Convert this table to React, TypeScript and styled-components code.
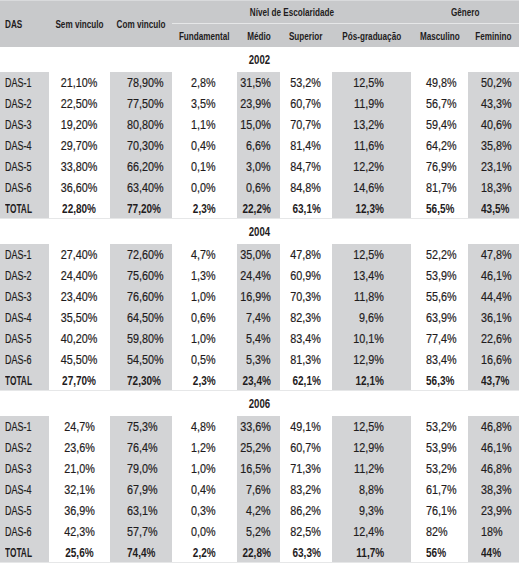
import React from "react";
import styled, { createGlobalStyle } from "styled-components";

const Global = createGlobalStyle`
  html, body { margin: 0; padding: 0; background: #ffffff; }
  body { font-family: "Liberation Sans", Arial, sans-serif; color: #1f1c1d; }
`;

const GRAY_HEAD = "#c8c9cb";
const GRAY_CELL = "#d3d4d6";
const LINE = "#e6e7e8";

type Align = "left" | "right" | "center";
interface ColSpec { width: number; align: Align; pad: number; shaded: boolean; }

const COLS: ColSpec[] = [
  { width: 49, align: "left", pad: 5, shaded: true },
  { width: 61, align: "center", pad: 0, shaded: false },
  { width: 62, align: "left", pad: 17, shaded: true },
  { width: 65, align: "right", pad: 21, shaded: false },
  { width: 43, align: "right", pad: 9, shaded: true },
  { width: 52, align: "right", pad: 11, shaded: false },
  { width: 79, align: "right", pad: 27, shaded: true },
  { width: 57, align: "left", pad: 15, shaded: false },
  { width: 51, align: "left", pad: 13, shaded: true },
];

const justify = (a: Align) => (a === "left" ? "flex-start" : a === "right" ? "flex-end" : "center");
const origin = (a: Align) => (a === "left" ? "left center" : a === "right" ? "right center" : "center center");

const Table = styled.table`
  width: 519px;
  table-layout: fixed;
  border-collapse: separate;
  border-spacing: 0;
  font-family: "Liberation Sans", Arial, sans-serif;
  color: #1f1c1d;
  border-top: 1px solid #d9dadc;
`;

const HeadRow = styled.tr<{ $h: number }>`
  height: ${(p) => p.$h}px;
`;

const HeadCell = styled.th<{ $rule?: boolean }>`
  background: ${GRAY_HEAD};
  padding: 0;
  font-size: 11px;
  font-weight: 700;
  vertical-align: middle;
  border-bottom: ${(p) => (p.$rule ? `1px solid ${LINE}` : "none")};
`;

const YearRow = styled.tr`
  height: 25px;
`;

const YearCell = styled.td`
  background: #ffffff;
  padding: 0;
  font-size: 13px;
  font-weight: 700;
  vertical-align: middle;
`;

const DataRow = styled.tr`
  height: 21px;
`;

const DataCell = styled.td<{ $shaded: boolean; $bold: boolean; $last: boolean }>`
  background: ${(p) => (p.$shaded ? GRAY_CELL : "#ffffff")};
  padding: 0;
  font-size: 13px;
  font-weight: ${(p) => (p.$bold ? 700 : 400)};
  -webkit-text-stroke: ${(p) => (p.$bold ? "0" : "0.2px")};
  vertical-align: middle;
  border-bottom: ${(p) => (p.$last ? `1px solid ${LINE}` : "none")};
`;

const Slot = styled.div<{ $align: Align; $padL: number; $padR: number }>`
  display: flex;
  justify-content: ${(p) => justify(p.$align)};
  padding: 0 ${(p) => p.$padR}px 0 ${(p) => p.$padL}px;
  white-space: nowrap;
`;

const Narrow = styled.span<{ $align: Align; $scale: number }>`
  display: inline-block;
  flex: none;
  transform: scaleX(${(p) => p.$scale});
  transform-origin: ${(p) => origin(p.$align)};
`;

function Txt({ children, align = "center", padL = 0, padR = 0, scale }: {
  children: React.ReactNode; align?: Align; padL?: number; padR?: number; scale: number;
}) {
  return (
    <Slot $align={align} $padL={padL} $padR={padR}>
      <Narrow $align={align} $scale={scale}>{children}</Narrow>
    </Slot>
  );
}

type Block = { year: string; rows: string[][] };

const DATA: Block[] = [
  {
    year: "2002",
    rows: [
      ["DAS-1", "21,10%", "78,90%", "2,8%", "31,5%", "53,2%", "12,5%", "49,8%", "50,2%"],
      ["DAS-2", "22,50%", "77,50%", "3,5%", "23,9%", "60,7%", "11,9%", "56,7%", "43,3%"],
      ["DAS-3", "19,20%", "80,80%", "1,1%", "15,0%", "70,7%", "13,2%", "59,4%", "40,6%"],
      ["DAS-4", "29,70%", "70,30%", "0,4%", "6,6%", "81,4%", "11,6%", "64,2%", "35,8%"],
      ["DAS-5", "33,80%", "66,20%", "0,1%", "3,0%", "84,7%", "12,2%", "76,9%", "23,1%"],
      ["DAS-6", "36,60%", "63,40%", "0,0%", "0,6%", "84,8%", "14,6%", "81,7%", "18,3%"],
      ["TOTAL", "22,80%", "77,20%", "2,3%", "22,2%", "63,1%", "12,3%", "56,5%", "43,5%"],
    ],
  },
  {
    year: "2004",
    rows: [
      ["DAS-1", "27,40%", "72,60%", "4,7%", "35,0%", "47,8%", "12,5%", "52,2%", "47,8%"],
      ["DAS-2", "24,40%", "75,60%", "1,3%", "24,4%", "60,9%", "13,4%", "53,9%", "46,1%"],
      ["DAS-3", "23,40%", "76,60%", "1,0%", "16,9%", "70,3%", "11,8%", "55,6%", "44,4%"],
      ["DAS-4", "35,50%", "64,50%", "0,6%", "7,4%", "82,3%", "9,6%", "63,9%", "36,1%"],
      ["DAS-5", "40,20%", "59,80%", "1,0%", "5,4%", "83,4%", "10,1%", "77,4%", "22,6%"],
      ["DAS-6", "45,50%", "54,50%", "0,5%", "5,3%", "81,3%", "12,9%", "83,4%", "16,6%"],
      ["TOTAL", "27,70%", "72,30%", "2,3%", "23,4%", "62,1%", "12,1%", "56,3%", "43,7%"],
    ],
  },
  {
    year: "2006",
    rows: [
      ["DAS-1", "24,7%", "75,3%", "4,8%", "33,6%", "49,1%", "12,5%", "53,2%", "46,8%"],
      ["DAS-2", "23,6%", "76,4%", "1,2%", "25,2%", "60,7%", "12,9%", "53,9%", "46,1%"],
      ["DAS-3", "21,0%", "79,0%", "1,0%", "16,5%", "71,3%", "11,2%", "53,2%", "46,8%"],
      ["DAS-4", "32,1%", "67,9%", "0,4%", "7,6%", "83,2%", "8,8%", "61,7%", "38,3%"],
      ["DAS-5", "36,9%", "63,1%", "0,3%", "4,2%", "86,2%", "9,3%", "76,1%", "23,9%"],
      ["DAS-6", "42,3%", "57,7%", "0,0%", "5,2%", "82,5%", "12,4%", "82%", "18%"],
      ["TOTAL", "25,6%", "74,4%", "2,2%", "22,8%", "63,3%", "11,7%", "56%", "44%"],
    ],
  },
];

const HEAD_SCALE = 0.74;

export default function App() {
  return (
    <>
      <Global />
      <Table>
        <colgroup>
          {COLS.map((c, i) => (
            <col key={i} style={{ width: c.width }} />
          ))}
        </colgroup>
        <thead>
          <HeadRow $h={23}>
            <HeadCell rowSpan={2}><Txt align="left" padL={5} scale={HEAD_SCALE}>DAS</Txt></HeadCell>
            <HeadCell rowSpan={2}><Txt scale={HEAD_SCALE}>Sem vinculo</Txt></HeadCell>
            <HeadCell rowSpan={2}><Txt scale={HEAD_SCALE}>Com vinculo</Txt></HeadCell>
            <HeadCell colSpan={4} $rule><Txt scale={HEAD_SCALE}>Nível de Escolaridade</Txt></HeadCell>
            <HeadCell colSpan={2} $rule><Txt scale={HEAD_SCALE}>Gênero</Txt></HeadCell>
          </HeadRow>
          <HeadRow $h={23}>
            <HeadCell><Txt scale={HEAD_SCALE}>Fundamental</Txt></HeadCell>
            <HeadCell><Txt scale={HEAD_SCALE}>Médio</Txt></HeadCell>
            <HeadCell><Txt scale={HEAD_SCALE}>Superior</Txt></HeadCell>
            <HeadCell><Txt scale={HEAD_SCALE}>Pós-graduação</Txt></HeadCell>
            <HeadCell><Txt scale={HEAD_SCALE}>Masculino</Txt></HeadCell>
            <HeadCell><Txt scale={HEAD_SCALE}>Feminino</Txt></HeadCell>
          </HeadRow>
        </thead>
        {DATA.map((block) => (
          <tbody key={block.year}>
            <YearRow>
              <YearCell colSpan={9}><Txt scale={0.74}>{block.year}</Txt></YearCell>
            </YearRow>
            {block.rows.map((row, ri) => {
              const isTotal = ri === block.rows.length - 1;
              return (
                <DataRow key={ri}>
                  {row.map((v, ci) => {
                    const c = COLS[ci];
                    const scale = ci === 0 ? (isTotal ? 0.64 : 0.69) : isTotal ? 0.77 : 0.83;
                    return (
                      <DataCell key={ci} $shaded={c.shaded} $bold={isTotal} $last={isTotal}>
                        <Txt
                          align={c.align}
                          padL={c.align === "left" ? c.pad : 0}
                          padR={c.align === "right" ? c.pad : 0}
                          scale={scale}
                        >
                          {v}
                        </Txt>
                      </DataCell>
                    );
                  })}
                </DataRow>
              );
            })}
          </tbody>
        ))}
      </Table>
    </>
  );
}
